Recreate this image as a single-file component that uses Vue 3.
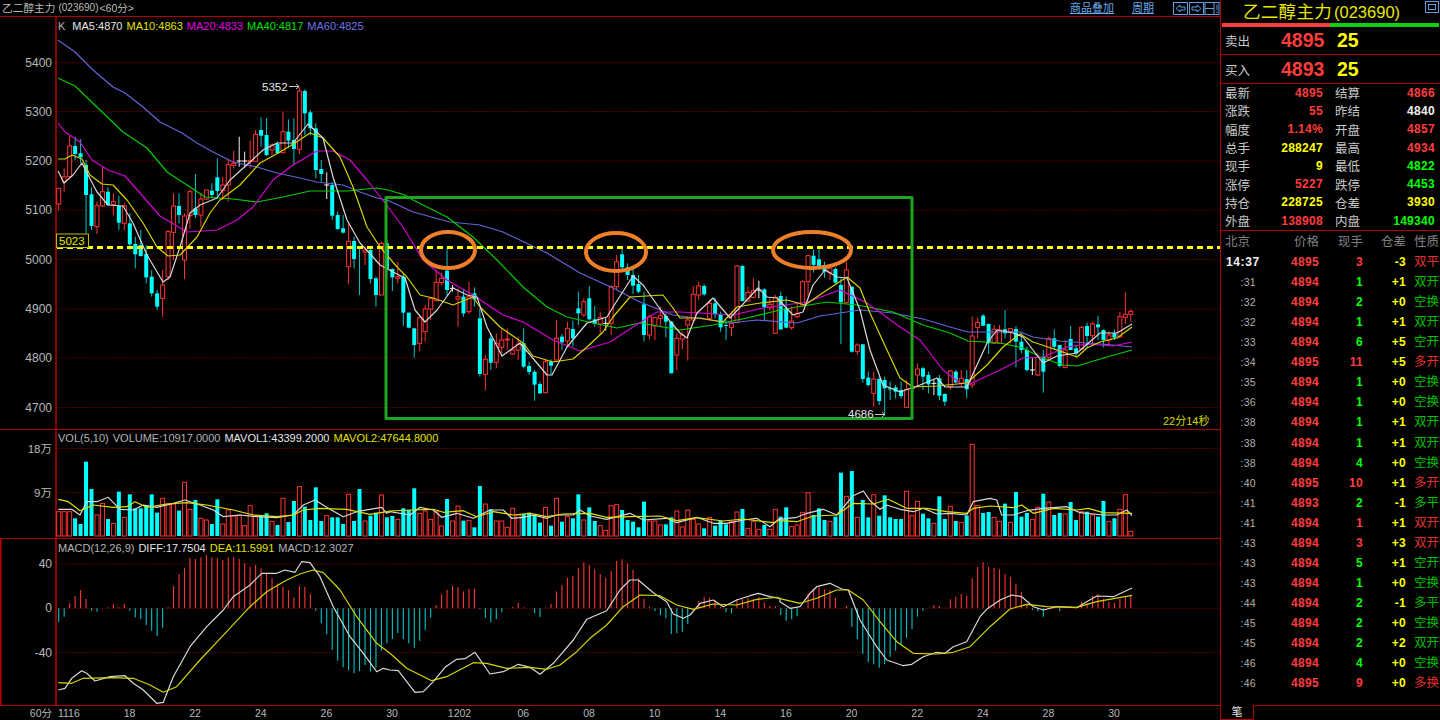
<template>
  <div class="terminal">
    <section class="chart-side">
      <header class="topbar">
        <span class="topbar-title">乙二醇主力</span>
        <span class="topbar-code">(023690)</span>
        <span class="topbar-period">&lt;60分&gt;</span>
        <span class="topbar-link first">商品叠加</span>
        <span class="topbar-link second">周期</span>
        <svg class="topbar-btns" width="47" height="13" viewBox="0 0 47 13">
          <g fill="none" stroke="#5f9fe0" stroke-width="1">
            <rect x="0.5" y="0.5" width="14" height="12" />
            <rect x="16.5" y="0.5" width="14" height="12" />
            <rect x="32" y="0.5" width="14" height="12" />
            <path d="M3 6.5 L7 3 V5 H12 V8 H7 V10 Z" />
            <path d="M28 6.5 L24 3 V5 H19 V8 H24 V10 Z" />
            <path d="M32 6.5 H41 M41 1 V12 M44 2.5 V8 M44 9.5 V11" />
          </g>
        </svg>
      </header>

      <div class="pane pane-price">
        <div class="legend legend-price">
          <span class="c-gray">K</span>
          <span class="c-white gap-k">MA5:4870</span>
          <span class="c-yellow">MA10:4863</span>
          <span class="c-magenta">MA20:4833</span>
          <span class="c-green">MA40:4817</span>
          <span class="c-blue">MA60:4825</span>
        </div>
        <svg width="1220" height="412" viewBox="0 17 1220 412">
          <line x1="56" y1="17" x2="56" y2="429" class="axis-line" />
          <g v-for="t in priceTicks" :key="t.label">
            <line x1="57" x2="1220" :y1="t.y" :y2="t.y" class="grid" />
            <text x="52" :y="t.y + 4" text-anchor="end" class="axis-text">{{ t.label }}</text>
          </g>
          <g v-for="(c, i) in candles" :key="i">
            <line :x1="c.x" :x2="c.x" :y1="c.wt" :y2="c.wb" :stroke="c.wick" stroke-width="1" />
            <line v-if="c.kind === 'w'" :x1="c.x - 2.5" :x2="c.x + 2.5" :y1="c.top" :y2="c.top" stroke="#fff" stroke-width="1" />
            <rect v-else :x="c.x - 2" :y="c.top" width="4" :height="c.h" :fill="c.fill" :stroke="c.stroke" stroke-width="1" />
          </g>
          <polyline :points="ma60" class="ma" stroke="#6464d8" />
          <polyline :points="ma40" class="ma" stroke="#00cc00" />
          <polyline :points="ma20" class="ma" stroke="#d400d4" />
          <polyline :points="ma10" class="ma" stroke="#d4d400" />
          <polyline :points="ma5" class="ma" stroke="#d8d8d8" />

          <line x1="57" x2="1220" y1="247.5" y2="247.5" class="level" />
          <rect x="56.5" y="234" width="32" height="13.5" class="level-box" />
          <text x="59" y="245" class="level-text">5023</text>

          <rect x="386" y="197.5" width="526" height="221" class="mark-rect" />
          <ellipse cx="448" cy="250" rx="27" ry="18" class="mark-oval" />
          <ellipse cx="616" cy="252" rx="30" ry="19" class="mark-oval" />
          <ellipse cx="812" cy="250" rx="39" ry="18" class="mark-oval" />

          <text x="262" y="91" class="note">5352</text>
          <path d="M289 86.5 H299 M296 84 L299 86.5 L296 89" class="note-arrow" />
          <text x="848" y="418" class="note">4686</text>
          <path d="M875 414.5 H885 M882 412 L885 414.5 L882 417" class="note-arrow" />
          <text x="1163" y="425" class="countdown">22分14秒</text>
        </svg>
      </div>

      <div class="pane pane-vol">
        <div class="legend legend-vol">
          <span class="c-gray">VOL(5,10)</span>
          <span class="c-gray">VOLUME:10917.0000</span>
          <span class="c-white">MAVOL1:43399.2000</span>
          <span class="c-yellow">MAVOL2:47644.8000</span>
        </div>
        <svg width="1220" height="108" viewBox="0 430 1220 108">
          <line x1="56" y1="430" x2="56" y2="538" class="axis-line" />
          <g v-for="t in volTicks" :key="t.label">
            <line x1="57" x2="1220" :y1="t.y" :y2="t.y" class="grid" />
            <text x="52" :y="t.y + 4" text-anchor="end" class="axis-text cjk">{{ t.label }}</text>
          </g>
          <rect
            v-for="(b, i) in volBars"
            :key="i"
            :x="b.x"
            :y="b.y"
            :width="b.w"
            :height="b.h"
            :fill="b.fill"
            :stroke="b.stroke"
          />
          <polyline :points="mavol1" class="ma" stroke="#d8d8d8" />
          <polyline :points="mavol2" class="ma" stroke="#e0e000" />
        </svg>
      </div>

      <div class="pane pane-macd">
        <div class="legend legend-macd">
          <span class="c-gray">MACD(12,26,9)</span>
          <span class="c-white">DIFF:17.7504</span>
          <span class="c-yellow">DEA:11.5991</span>
          <span class="c-gray">MACD:12.3027</span>
        </div>
        <svg width="1220" height="166" viewBox="0 539 1220 166">
          <path d="M0.75 539 V705 M56 539 V705" class="axis-box" />
          <g v-for="t in macdTicks" :key="t.label">
            <line x1="57" x2="1220" :y1="t.y" :y2="t.y" class="grid" />
            <text x="52" :y="t.y + 4" text-anchor="end" class="axis-text">{{ t.label }}</text>
          </g>
          <line
            v-for="(b, i) in macdBars"
            :key="i"
            :x1="b.x"
            :x2="b.x"
            y1="608.3"
            :y2="b.y"
            :stroke="b.color"
            stroke-width="1.1"
          />
          <polyline :points="diff" class="ma" stroke="#d8d8d8" />
          <polyline :points="dea" class="ma" stroke="#d4d400" />
        </svg>
      </div>

      <footer class="xaxis">
        <span class="xaxis-unit">60分</span>
        <span v-for="(l, i) in xLabels" :key="i" :class="['xaxis-tick', { wide: l === '1202' }]">{{ l }}</span>
      </footer>
    </section>

    <aside class="side">
      <div class="side-title">
        <span class="side-name">乙二醇主力</span><span class="side-code">(023690)</span>
        <span class="win-btn"><i></i></span>
      </div>
      <div class="ratio"><span class="ratio-up"></span><span class="ratio-down"></span></div>

      <div class="book">
        <span class="book-label">卖出</span>
        <span class="book-price">4895</span>
        <span class="book-size">25</span>
      </div>
      <div class="book">
        <span class="book-label">买入</span>
        <span class="book-price">4893</span>
        <span class="book-size">25</span>
      </div>

      <div class="stats">
        <template v-for="s in stats" :key="s.label">
          <span class="stat-label">{{ s.label }}</span>
          <span :class="['stat-value', s.color]">{{ s.value }}</span>
        </template>
      </div>

      <div class="tick-row tick-head">
        <span class="t-time">北京</span>
        <span class="t-num">价格</span>
        <span class="t-num">现手</span>
        <span class="t-num">仓差</span>
        <span class="t-kind">性质</span>
      </div>
      <div v-for="(t, i) in ticks" :key="i" class="tick-row">
        <span :class="i === 0 ? 't-clock' : 't-sec'">{{ t.time }}</span>
        <span class="t-num v-red">{{ t.price }}</span>
        <span :class="['t-num', t.side === 'r' ? 'v-red' : 'v-green']">{{ t.size }}</span>
        <span class="t-num v-yellow">{{ t.change }}</span>
        <span :class="['t-kind', t.side === 'r' ? 'k-red' : 'k-green']">{{ t.kind }}</span>
      </div>

      <div class="tabs">
        <span class="tab">笔</span>
        <span class="tab-rest"></span>
      </div>
    </aside>
  </div>
</template>

<script setup>
// pixel helpers: the numbers below are traced from the chart, at 3x
const STEP = 5.47
const cx = (i) => 58.7 + STEP * i

function traced(xOff, yOff, pts) {
  const out = []
  for (let i = 0; i < pts.length; i += 2) {
    out.push(`${(xOff + pts[i] / 3).toFixed(1)},${(yOff + pts[i + 1] / 3).toFixed(1)}`)
  }
  return out.join(' ')
}

function plain(pts) {
  const out = []
  for (let i = 0; i < pts.length; i += 2) out.push(`${pts[i]},${pts[i + 1]}`)
  return out.join(' ')
}

// [kind, bodyTop, bodyBottom, wickTop, wickBottom]
const segA = [
  ['r',325,372,325,392],['r',290,305,265,335],['r',198,290,168,290],['c',198,222,170,240],['c',220,232,178,250],
  ['c',255,345,240,460],['c',343,438,322,450],['r',377,440,365,462],['r',335,378,258,380],['c',335,375,322,378],
  ['r',365,373,340,405],['c',378,428,348,450],['r',378,430,370,450],['c',430,493,400,510],['c',492,523,470,565],
  ['c',495,528,450,530],['c',522,592,495,610],['c',590,640,570,650],['c',640,680,630,690],['r',615,655,570,710],
  ['r',455,590,450,600],['r',378,457,340,540],['c',378,405,340,430],['r',408,540,400,598],['r',335,407,328,445],
  ['c',385,405,282,415],['r',357,405,340,440],['r',330,357,330,360],['c',332,345,310,355],['c',292,333,235,355],
  ['r',315,332,290,360],['r',254,315,240,365],['r',250,256,212,265],['w',243,243,170,260],['w',243,243,215,262],
  ['r',242,245,182,265],['r',163,244,150,245],['c',150,167,112,200],['c',165,225,115,228],['r',195,210,190,225],
  ['c',192,220,185,222],['r',155,218,95,220],['c',155,182,118,205],['c',180,207,115,255],['r',33,208,20,222],
  ['c',33,100,28,165],['c',97,145,90,165],['c',145,270,130,295],['c',267,282,240,305],['w',315,315,277,357],
  ['c',315,407,305,420],['c',405,447,395,450],['c',445,458,405,460],['r',484,560,430,613],['c',483,537,470,565],
  ['c',500,506,500,645],['r',510,516,500,555],['c',510,597,505,610],['c',595,645,590,680],
]
const segB = [
  ['r',160,315,155,315],['c',160,237,150,265],['c',237,262,235,303],['r',260,265,215,280],['c',260,368,250,408],
  ['c',368,413,368,415],['c',415,465,415,503],['r',383,460,380,483],['r',357,425,345,455],['r',325,357,325,390],
  ['r',277,332,240,332],['r',265,278,248,285],['c',242,300,172,318],['w',295,295,285,305],['r',320,327,295,410],
  ['c',320,370,300,380],['r',320,365,275,372],['c',310,328,292,350],['c',385,552,355,560],['r',508,553,495,600],
  ['c',445,518,430,540],['r',460,517,430,535],['r',450,472,415,490],['r',447,450,415,480],['r',480,492,445,495],
  ['r',463,480,440,510],['c',460,530,415,535],['c',528,546,515,555],['c',545,584,540,632],['c',582,610,575,612],
  ['r',515,608,510,610],['c',515,527,508,555],['r',445,510,390,510],['c',440,457,432,480],['r',415,453,395,465],
  ['c',417,445,392,470],['c',355,370,305,405],['r',335,375,325,380],['c',325,388,288,392],['c',388,402,348,410],
  ['r',382,402,365,435],['w',400,400,385,422],['r',290,400,285,435],['r',215,290,195,300],['c',193,232,175,245],
  ['c',232,255,220,270],['c',255,287,235,312],['c',282,305,255,310],['c',343,435,305,455],['r',380,435,375,448],
  ['r',383,408,383,450],['r',377,385,350,410],['c',378,395,370,442],['c',395,550,393,550],['r',445,495,430,540],
]
const segC = [
  ['r',435,447,425,478],['r',390,405,380,512],['r',313,390,288,395],['r',288,315,275,330],['c',288,313,283,318],
  ['r',340,385,330,392],['c',340,373,323,385],['c',373,412,365,425],['c',405,408,390,450],['r',400,412,365,438],
  ['r',228,398,225,400],['c',228,333,225,335],['r',307,333,290,335],['r',302,322,265,325],['w',300,300,272,325],
  ['c',298,352,295,390],['r',343,353,325,362],['r',322,430,315,430],['c',318,418,305,420],['c',355,413,320,415],
  ['r',393,413,350,420],['r',370,380,340,385],['r',275,345,270,350],['r',197,275,195,320],['c',197,225,178,248],
  ['c',208,230,170,232],['c',225,245,215,263],['r',235,247,225,270],['c',237,278,232,282],['c',285,337,265,462],
  ['r',240,338,215,340],['c',290,485,290,488],['r',465,485,460,495],['c',463,567,463,578],['c',563,585,545,590],
  ['r',567,610,545,650],['c',567,633,560,645],['c',570,595,560,675],['c',595,598,575,630],['c',592,605,585,625],
  ['c',600,618,575,625],['r',598,652,570,652],['w',595,595,590,600],['r',537,555,520,590],['c',535,560,530,600],
  ['c',555,583,545,610],['w',580,580,568,615],['c',565,617,555,630],['c',612,635,610,648],['r',543,590,540,600],
  ['c',545,577,540,580],['r',565,580,540,590],['c',567,598,540,625],
]
const segD = [
  ['r',198,345,140,355],['r',157,172,143,205],['c',137,167,132,168],['c',162,220,160,252],['r',178,220,165,220],
  ['r',180,220,165,222],['c',178,190,120,205],['r',176,185,175,220],['c',177,215,168,292],['c',215,240,185,250],
  ['c',240,300,230,305],['w',300,300,265,315],['r',262,315,250,318],['c',260,305,240,368],['r',205,262,200,270],
  ['c',205,230,178,240],['c',225,288,225,292],['r',240,292,210,295],['c',207,240,168,240],['c',235,250,228,262],
  ['r',172,237,168,240],['c',168,198,158,235],['r',162,197,155,225],['c',163,172,138,210],['c',180,210,178,232],
  ['r',195,210,185,225],['c',190,203,178,210],['r',140,200,125,205],['r',133,142,67,162],['r',124,133,118,155],
]

const RED = '#ff3232'
const CYAN = '#00ffff'
const raw = [
  ...segA.map((r) => [80, r]),
  ...segB.map((r) => [190, r]),
  ...segC.map((r) => [190, r]),
  ...segD.map((r) => [270, r]),
]
const candles = raw.map(([off, [kind, top, bottom, wt, wb]], i) => {
  const y = (v) => off + v / 3
  return {
    kind,
    x: cx(i),
    top: y(top),
    h: Math.max(y(bottom) - y(top), 1),
    wt: y(wt),
    wb: y(wb),
    wick: kind === 'r' ? RED : kind === 'c' ? '#00c8c8' : '#f0f0f0',
    fill: kind === 'r' ? '#000' : CYAN,
    stroke: kind === 'r' ? RED : 'none',
  }
})

const ma60 = plain([58,40,75,52,93,70,113,87,125,93,143,107,160,122,182,133,197,143,213,152,233,162,257,167,277,173,300,178,317,182,343,185,360,192,377,198,387,200,413,212,450,222,480,225,503,232,547,253,580,273,613,288,640,302,673,315,703,319,730,323,757,320,797,323,820,316,860,310,893,313,923,319,950,327,968,332,1000,332,1020,332,1033,337,1060,341,1087,343,1113,345,1132,347])
const ma40 = plain([58,78,75,86,100,110,123,132,147,148,167,172,190,187,205,197,233,199,257,202,283,197,310,191,347,191,377,188,388,190,405,195,413,200,447,217,473,237,497,260,523,287,547,307,567,317,593,323,617,328,640,323,680,330,693,328,713,325,747,318,780,310,797,307,827,302,857,305,893,312,923,325,950,333,968,341,1000,343,1023,348,1040,357,1063,365,1077,366,1107,357,1132,350])
const ma20 = plain([58,123,65,132,80,142,92,160,108,170,125,176,140,193,160,216,187,232,217,230,237,220,253,207,273,180,293,165,317,151,333,151,350,160,367,180,385,203,403,227,423,260,447,280,473,295,503,315,523,322,553,340,580,351,610,342,633,327,657,312,680,312,700,313,733,315,763,308,807,302,840,290,867,303,900,327,920,340,943,370,960,383,970,384,1000,370,1023,358,1043,357,1067,347,1087,344,1113,346,1132,342])
const ma10 = plain([58,159,65,159,72,155,82,159,90,175,102,184,113,185,127,200,143,223,157,247,168,256,180,255,197,237,210,213,220,200,240,185,260,163,280,152,295,143,310,133,323,138,340,157,353,187,367,227,380,247,397,267,407,277,420,295,433,298,453,305,473,297,480,307,500,327,523,343,533,356,553,362,573,359,587,347,603,332,613,317,630,297,663,295,673,308,680,318,700,318,723,322,737,307,760,303,787,300,805,305,827,290,847,277,860,288,870,313,887,350,900,378,913,387,937,386,967,383,987,365,1003,347,1020,334,1033,342,1057,350,1077,357,1087,348,1100,342,1117,338,1132,327])
const ma5 = plain([58,171,64,183,73,175,82,163,87,173,97,192,108,205,123,206,133,223,147,255,163,282,170,277,180,247,190,213,200,205,217,198,230,180,250,162,263,150,277,143,293,143,308,124,323,138,333,177,347,220,360,243,373,257,380,265,393,272,405,278,415,310,425,322,437,310,453,288,467,295,477,297,487,327,502,356,520,343,547,375,552,375,567,347,587,323,607,317,613,307,633,276,643,285,663,313,680,333,687,338,697,313,713,298,730,318,758,288,767,297,777,298,793,315,803,312,813,285,825,270,837,277,847,278,860,310,870,350,883,385,900,392,920,385,937,378,945,387,967,387,987,343,997,330,1013,333,1023,337,1043,363,1057,356,1077,353,1100,333,1117,333,1132,324])

// bar tops at 3x, negative = falling bar
const volA = [275,275,275,-295,-312,-125,-207,285,250,-297,310,-215,292,-223,-265,-265,-255,-223,-278,235,252,252,-272,187,268,-240,295,300,-312,-238,312,270,288,285,317,257,288,-285,-280,304,-315,235,-306,-243,200,-260,-300,-202,-303,287,-292,-292,-312,223,-303,-207,303,-287,-278,225,-292]
const volB = [-258,268,-235,-240,-175,250,243,268,245,288,-207,273,228,-272,271,-292,-168,222,-238,273,273,292,235,255,-252,-248,-255,-278,232,-287,205,-275,260,-265,-193,270,-232,-273,287,301,227,224,-240,-270,-275,-292,-215,273,273,285,-283,-262,243,291,240,268,282,-295,262,-287,-273,-283,275,246,-237,295,275,298,-285,298,238,-260,-232,290,285,247,188,-255,-235,-270,274,-260,-128,199,-123,262,-210,-262,194,-257,-196,-262,-267,-267,184,257,214,-251,-265,280,-199,-267,229,-273,277,-257,43,227,-249,-246,262,274,-221,277,-186,-260,-249,268,232,-191,216,-255,-249,252,-216,-270,245,-245,255,-260,-213,274,-265,238,194,304]
const volBase = 536
const volBars = [...volA.map((v) => [420, v]), ...volB.map((v) => [430, v])].map(([off, v], i) => {
  const up = v > 0
  const y = off + Math.abs(v) / 3
  return {
    x: cx(i) - 2,
    y,
    w: 4,
    h: volBase - y,
    fill: up ? '#000' : CYAN,
    stroke: up ? RED : 'none',
  }
})

const macdA = [607,590,550,528,510,537,572,575,565,562,552,562,552,572,592,597,615,632,648,623,562,498,462,443,413,417,412,405,412,415,420,412,412,417,430,440,435,445,460,475,490,500,510,532,498,500,522,572,610,643,690,722,742,750,760,753,735,755,743,692,670]
const macdB = [627,610,627,640,653,632,600,563,525,492,479,468,471,484,476,476,538,563,577,567,547,535,531,519,532,535,550,561,533,522,484,465,443,438,415,397,405,418,432,443,423,393,388,400,420,445,506,530,543,555,565,612,610,605,582,533,513,500,503,512,530,547,550,507,508,503,508,502,518,528,528,555,572,568,558,533,490,478,472,478,480,503,534,528,590,627,672,697,703,713,703,680,662,645,623,597,560,542,535,525,528,533,508,500,492,497,445,410,397,410,413,418,432,441,462,486,522,540,544,560,537,530,543,535,535,534,515,520,497,492,507,515,518,507,498,497]
const macdBars = [...macdA.map((v) => 420 + v / 3), ...macdB.map((v) => 430 + v / 3)].map((y, i) => ({
  x: cx(i),
  y,
  color: y < 608.3 ? RED : '#00c4c4',
}))

const mavol1 = [
  traced(0, 420, [175,268,215,268,240,285,260,245,290,245,325,232,360,268,400,270,430,255,470,262,520,250,555,240,600,255,640,270,670,290,720,285,770,290,830,293,880,285,910,255,945,240,980,262,1030,290,1070,275,1110,268,1145,262,1160,280]),
  traced(390, 430, [0,245,60,255,90,232,130,240,155,262,200,250,250,265,300,240,340,240,365,265,400,262,430,255,470,265,500,255,550,255,570,240,600,258,650,268,720,250,760,270,830,265,860,278,920,262,970,280,1010,280,1060,270,1100,265,1140,290,1170,265]),
  traced(780, 430, [0,268,50,262,80,250,130,238,170,255,220,197,250,183,270,212,300,238,320,225,360,238,400,245,430,235,470,252,510,250,560,255,580,215,630,205,650,210,665,255,700,255,740,242,790,235,860,230,900,248,970,255,1010,255,1040,240,1056,257]),
].join(' ')
const mavol2 = [
  traced(0, 420, [175,238,205,245,240,272,280,255,340,262,380,260,405,245,440,262,500,252,560,248,620,255,700,270,760,285,830,290,880,285,910,270,960,265,1040,268,1110,283,1160,275]),
  traced(390, 430, [0,243,60,240,130,238,160,247,220,242,260,260,310,245,370,255,420,250,470,260,520,252,600,250,650,262,720,260,810,258,860,272,920,263,1000,273,1060,267,1150,278,1170,270]),
  traced(780, 430, [0,272,50,275,100,258,170,255,220,220,280,222,325,208,380,235,440,235,500,245,560,250,580,235,630,228,700,233,725,225,760,250,820,235,890,240,925,235,970,248,1056,250]),
].join(' ')
const diff = [
  traced(0, 420, [175,810,195,805,215,775,245,752,260,760,285,783,330,770,375,767,400,790,430,810,470,850,490,847,520,770,570,680,620,620,670,570,700,530,750,495,785,460,830,460,855,450,885,457,905,425,930,428,960,470,1000,560,1050,650,1090,700,1130,755,1150,745]),
  traced(390, 430, [0,720,25,722,75,787,100,785,130,755,165,712,200,688,225,686,255,667,300,732,340,725,385,703,420,712,450,733,490,700,550,630,590,568,650,542,690,480,720,450,745,450,790,488,830,515,850,552,880,565,900,555,930,520,970,510,1000,530,1040,510,1080,497,1105,490,1140,500,1170,505]),
  traced(780, 430, [0,515,30,535,60,530,90,490,110,470,150,460,185,477,205,480,240,570,290,650,320,690,370,707,395,703,430,680,470,667,495,670,520,650,560,635,600,560,620,538,660,510,695,495,725,500,760,530,790,540,830,530,890,533,920,515,950,498,1000,500,1056,474]),
].join(' ')
const dea = [
  traced(0, 420, [175,788,215,790,250,775,330,773,400,775,450,795,490,817,530,800,600,720,680,635,750,560,800,515,860,480,900,462,940,450,970,458,1020,510,1070,590,1130,670]),
  traced(390, 430, [0,670,50,715,125,752,170,740,250,698,290,700,350,715,420,712,470,718,510,705,560,665,600,625,650,585,700,530,750,495,810,497,860,525,910,538,970,522,1040,525,1100,508,1160,502]),
  traced(780, 430, [0,506,60,520,110,505,170,480,205,480,250,510,300,575,350,635,400,670,470,672,520,667,570,650,630,590,690,537,740,523,800,530,890,532,950,515,1056,496]),
].join(' ')

const priceTicks = [
  { label: '5400', y: 62.5 },
  { label: '5300', y: 111.5 },
  { label: '5200', y: 161 },
  { label: '5100', y: 210 },
  { label: '5000', y: 259.5 },
  { label: '4900', y: 309 },
  { label: '4800', y: 358 },
  { label: '4700', y: 407.5 },
]
const volTicks = [
  { label: '18万', y: 448.5 },
  { label: '9万', y: 492.5 },
]
const macdTicks = [
  { label: '40', y: 564 },
  { label: '0', y: 608.3 },
  { label: '-40', y: 652.5 },
]
const xLabels = ['1116', '18', '22', '24', '26', '30', '1202', '06', '08', '10', '14', '16', '20', '22', '24', '28', '30']

const stats = [
  { label: '最新', value: '4895', color: 'v-red' },
  { label: '结算', value: '4866', color: 'v-red' },
  { label: '涨跌', value: '55', color: 'v-red' },
  { label: '昨结', value: '4840', color: 'v-white' },
  { label: '幅度', value: '1.14%', color: 'v-red' },
  { label: '开盘', value: '4857', color: 'v-red' },
  { label: '总手', value: '288247', color: 'v-yellow' },
  { label: '最高', value: '4934', color: 'v-red' },
  { label: '现手', value: '9', color: 'v-yellow' },
  { label: '最低', value: '4822', color: 'v-green' },
  { label: '涨停', value: '5227', color: 'v-red' },
  { label: '跌停', value: '4453', color: 'v-green' },
  { label: '持仓', value: '228725', color: 'v-yellow' },
  { label: '仓差', value: '3930', color: 'v-yellow' },
  { label: '外盘', value: '138908', color: 'v-red' },
  { label: '内盘', value: '149340', color: 'v-green' },
]

const ticks = [
  ['14:37', 4895, 3, '-3', '双平', 'r'],
  [':31', 4894, 1, '+1', '双开', 'g'],
  [':32', 4894, 2, '+0', '空换', 'g'],
  [':32', 4894, 1, '+1', '双开', 'g'],
  [':33', 4894, 6, '+5', '空开', 'g'],
  [':34', 4895, 11, '+5', '多开', 'r'],
  [':35', 4894, 1, '+0', '空换', 'g'],
  [':36', 4894, 1, '+0', '空换', 'g'],
  [':38', 4894, 1, '+1', '双开', 'g'],
  [':38', 4894, 1, '+1', '双开', 'g'],
  [':38', 4894, 4, '+0', '空换', 'g'],
  [':40', 4895, 10, '+1', '多开', 'r'],
  [':41', 4893, 2, '-1', '多平', 'g'],
  [':41', 4894, 1, '+1', '双开', 'r'],
  [':43', 4894, 3, '+3', '双开', 'r'],
  [':43', 4894, 5, '+1', '空开', 'g'],
  [':43', 4894, 1, '+0', '空换', 'g'],
  [':44', 4894, 2, '-1', '多平', 'g'],
  [':45', 4894, 2, '+0', '空换', 'g'],
  [':45', 4894, 2, '+2', '双开', 'g'],
  [':46', 4894, 4, '+0', '空换', 'g'],
  [':46', 4895, 9, '+0', '多换', 'r'],
].map(([time, price, size, change, kind, side]) => ({ time, price, size, change, kind, side }))
</script>

<style>
html,
body {
  background: #000;
  overflow: hidden;
}
</style>

<style scoped>
.terminal {
  display: grid;
  grid-template-columns: 1220px 220px;
  width: 1440px;
  height: 720px;
  background: #000;
  font-family: "Liberation Sans", "Noto Sans CJK SC", sans-serif;
  color: #c8c8c8;
  overflow: hidden;
}

.chart-side {
  display: flex;
  flex-direction: column;
  min-width: 0;
}

.topbar {
  position: relative;
  display: flex;
  align-items: center;
  height: 16px;
  border-bottom: 1px solid #b00000;
  padding-left: 2px;
  font-size: 11px;
  line-height: 16px;
  color: #bdbdbd;
}
.topbar-title {
  font-size: 10.7px;
}
.topbar-code {
  font-size: 10px;
  margin-left: 3px;
}
.topbar-period {
  font-size: 10.5px;
  margin-left: 1px;
}
.topbar-link {
  color: #6aa8ea;
  text-decoration: underline;
  font-size: 11px;
}
.topbar-link.first {
  margin-left: auto;
}
.topbar-link.second {
  margin-left: 18px;
  margin-right: 19px;
}
.topbar-btns {
  display: block;
  margin-right: 0;
}

.pane {
  position: relative;
  border-bottom: 1px solid #b00000;
}
.pane svg {
  display: block;
}
.pane-price {
  height: 412px;
}
.pane-vol {
  height: 108px;
}
.pane-macd {
  height: 166px;
}

.legend {
  position: absolute;
  left: 58px;
  display: flex;
  gap: 4px;
  font-size: 11px;
  line-height: 13px;
  white-space: nowrap;
}
.legend-price {
  top: 3px;
}
.legend-vol {
  top: 2px;
}
.legend-macd {
  top: 3px;
}
.gap-k {
  margin-left: 3px;
}
.c-gray {
  color: #b4b4b4;
}
.c-white {
  color: #e6e6e6;
}
.c-yellow {
  color: #e0e000;
}
.c-magenta {
  color: #e000e0;
}
.c-green {
  color: #00e000;
}
.c-blue {
  color: #7070e8;
}

.axis-line {
  stroke: #b00000;
  stroke-width: 1.5;
}
.axis-box {
  fill: none;
  stroke: #c00000;
  stroke-width: 1.5;
}
.grid {
  stroke: #8a0000;
  stroke-width: 1;
  stroke-dasharray: 1 1.5;
}
.axis-text {
  font-size: 12px;
  fill: #b8b8b8;
}
.cjk {
  font-size: 11.5px;
}
.ma {
  fill: none;
  stroke-width: 1.2;
  stroke-linejoin: round;
}
.level {
  stroke: #ffff00;
  stroke-width: 3;
  stroke-dasharray: 6 4;
}
.level-box {
  fill: #000;
  stroke: #bcbc00;
  stroke-width: 1;
}
.level-text {
  font-size: 11.5px;
  fill: #e6e600;
}
.mark-rect {
  fill: none;
  stroke: #1fa51f;
  stroke-width: 3;
  stroke-linejoin: round;
}
.mark-oval {
  fill: none;
  stroke: #ee7f2a;
  stroke-width: 4;
}
.note {
  font-size: 11.5px;
  fill: #e6e6e6;
}
.note-arrow {
  fill: none;
  stroke: #c8c8c8;
  stroke-width: 1;
}
.countdown {
  font-size: 11px;
  fill: #d8d800;
}

.xaxis {
  display: flex;
  align-items: center;
  height: 14px;
  font-size: 10.5px;
  line-height: 14px;
  color: #b8b8b8;
}
.xaxis-unit {
  width: 58px;
  padding-right: 6px;
  box-sizing: border-box;
  text-align: right;
  font-size: 10.5px;
}
.xaxis-tick {
  width: 65.65px;
  flex: none;
}
.xaxis-tick.wide {
  margin-left: -4px;
  margin-right: 4px;
}

.side {
  display: flex;
  flex-direction: column;
  border-left: 1.5px solid #b00000;
  box-sizing: border-box;
  min-width: 0;
}
.side-title {
  position: relative;
  height: 23px;
  flex: none;
  display: flex;
  align-items: center;
  padding-left: 22px;
  color: #e8e800;
  line-height: 22px;
}
.side-name {
  font-size: 17.5px;
  letter-spacing: 0.3px;
}
.side-code {
  font-size: 16.5px;
  margin-left: 2px;
}
.win-btn {
  position: absolute;
  top: 1px;
  right: 1px;
  width: 14px;
  height: 12px;
  border: 1px solid #5f9fe0;
  box-sizing: border-box;
  display: flex;
  padding: 2px;
}
.win-btn i {
  flex: 1;
  border: 1px solid #5f9fe0;
}
.ratio {
  display: flex;
  height: 4px;
  margin: 0 1px;
  flex: none;
}
.ratio-up {
  width: 108px;
  background: #ff3c3c;
}
.ratio-down {
  flex: 1;
  background: #10d010;
}

.book {
  display: flex;
  align-items: center;
  height: 28px;
  flex: none;
  border-bottom: 1px solid #b00000;
  box-sizing: border-box;
  padding-left: 4px;
}
.book + .book {
  height: 28.5px;
  padding-top: 1px;
}
.book-label {
  width: 56px;
  font-size: 12.5px;
  color: #c8c8c8;
}
.book-price {
  width: 56px;
  font-size: 19.5px;
  font-weight: 700;
  color: #ff3c3c;
}
.book-size {
  font-size: 19.5px;
  font-weight: 700;
  color: #ffff00;
}

.stats {
  display: grid;
  grid-template-columns: 30px 68px 30px 1fr;
  grid-auto-rows: 18.3px;
  padding: 0 5px 0 4px;
  border-bottom: 1px solid #b00000;
  flex: none;
  align-items: center;
}
.stats .stat-label:nth-child(4n + 3) {
  margin-left: 12px;
}
.stat-label {
  font-size: 12.5px;
  color: #c8c8c8;
  white-space: nowrap;
}
.stat-value {
  justify-self: end;
  font-size: 12px;
  font-weight: 700;
  letter-spacing: 0.3px;
}
.v-red {
  color: #ff3c3c;
}
.v-white {
  color: #f0f0f0;
}
.v-yellow {
  color: #ffff00;
}
.v-green {
  color: #00ff00;
}

.tick-row {
  display: grid;
  grid-template-columns: 37px 61px 44px 43px 1fr;
  column-gap: 0;
  height: 20.07px;
  line-height: 20.07px;
  font-size: 12px;
  font-weight: 700;
  flex: none;
  letter-spacing: 0.3px;
}
.tick-head {
  margin-top: 1px;
  font-weight: 400;
  font-size: 12.5px;
  color: #808080;
  letter-spacing: 0;
}
.tick-head .t-time {
  padding-left: 4px;
  white-space: nowrap;
}
.t-clock {
  font-size: 12px;
  color: #f0f0f0;
  padding-left: 5px;
  letter-spacing: 0.6px;
  white-space: nowrap;
}
.t-sec {
  font-size: 10.5px;
  font-weight: 400;
  color: #b0b0b0;
  text-align: right;
  padding-right: 2px;
}
.t-num {
  text-align: right;
}
.t-kind {
  padding-left: 8px;
  font-size: 12.5px;
  font-weight: 400;
  letter-spacing: 0;
  white-space: nowrap;
}
.k-red {
  color: #e03030;
}
.k-green {
  color: #00c000;
}

.tabs {
  margin-top: auto;
  display: flex;
  height: 15px;
  flex: none;
}
.tab {
  width: 33px;
  text-align: center;
  font-size: 11px;
  line-height: 15px;
  color: #e0e0e0;
  border-right: 1px solid #b00000;
  border-bottom: 1px solid #b00000;
  border-bottom-right-radius: 2px;
  box-sizing: border-box;
}
.tab-rest {
  flex: 1;
  border-top: 1px solid #b00000;
  border-top-left-radius: 2px;
}
</style>
